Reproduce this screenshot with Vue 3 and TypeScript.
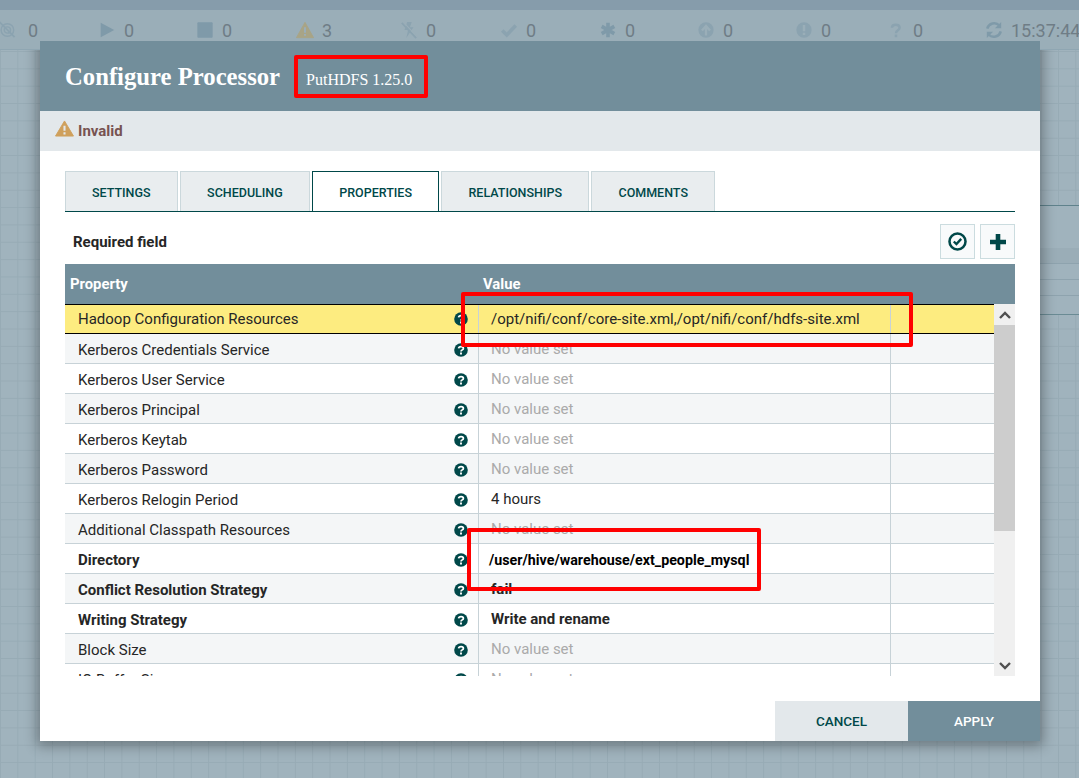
<script setup lang="ts">
interface StatusItem {
  icon: string;
  count: string;
  width: number;
}

interface PropRow {
  name: string;
  value: string;
  required?: boolean;
  unset?: boolean;
}

// counts in the status bar, width = distance to the next item
const statusItems: StatusItem[] = [
  { icon: "disabled", count: "0", width: 96 },
  { icon: "play", count: "0", width: 98 },
  { icon: "stop", count: "0", width: 100 },
  { icon: "warn", count: "3", width: 104 },
  { icon: "bolt", count: "0", width: 100 },
  { icon: "check", count: "0", width: 99 },
  { icon: "star", count: "0", width: 98 },
  { icon: "up", count: "0", width: 98 },
  { icon: "excl", count: "0", width: 92 },
  { icon: "question", count: "0", width: 98 },
  { icon: "refresh", count: "15:37:44", width: 120 },
];

const tabs = ["Settings", "Scheduling", "Properties", "Relationships", "Comments"];
const activeTab = "Properties";

const noValue = "No value set";

const rows: PropRow[] = [
  { name: "Hadoop Configuration Resources", value: "/opt/nifi/conf/core-site.xml,/opt/nifi/conf/hdfs-site.xml" },
  { name: "Kerberos Credentials Service", value: noValue, unset: true },
  { name: "Kerberos User Service", value: noValue, unset: true },
  { name: "Kerberos Principal", value: noValue, unset: true },
  { name: "Kerberos Keytab", value: noValue, unset: true },
  { name: "Kerberos Password", value: noValue, unset: true },
  { name: "Kerberos Relogin Period", value: "4 hours" },
  { name: "Additional Classpath Resources", value: noValue, unset: true },
  { name: "Directory", value: "/user/hive/warehouse/ext_people_mysql", required: true },
  { name: "Conflict Resolution Strategy", value: "fail", required: true },
  { name: "Writing Strategy", value: "Write and rename", required: true },
  { name: "Block Size", value: noValue, unset: true },
  { name: "IO Buffer Size", value: noValue, unset: true },
];
</script>

<template>
  <div class="page">
    <div class="topbar"></div>

    <div class="status">
      <div
        v-for="item in statusItems"
        :key="item.icon"
        class="status-item"
        :style="{ width: item.width + 'px' }"
      >
        <svg class="status-icon" viewBox="0 0 20 20">
          <g v-if="item.icon === 'disabled'" fill="none" stroke="#8ba3b0" stroke-width="1.6">
            <circle cx="6" cy="10" r="7" />
            <circle cx="6" cy="10" r="3.5" />
            <path d="M-3 1 14 18" stroke-width="2" />
          </g>
          <path v-else-if="item.icon === 'play'" d="M3 2 18 10 3 18Z" fill="#7f9aa9" />
          <rect v-else-if="item.icon === 'stop'" x="1.5" y="1.5" width="17" height="17" rx="1" fill="#7f9aa9" />
          <g v-else-if="item.icon === 'warn'">
            <path d="M10 1.5 19.5 18.5H.5Z" fill="#a8a486" stroke="#a8a486" stroke-linejoin="round" />
            <path d="M10 7v6M10 14.5v2" stroke="#9aaeb8" stroke-width="2.2" />
          </g>
          <g v-else-if="item.icon === 'bolt'">
            <path d="M8 1h5l-2 6h4L7 19l2-9H5Z" fill="#8ba3b0" />
            <path d="M2 2 18 19" stroke="#8ba3b0" stroke-width="2" />
            <path d="M3.5 1 19.5 18" stroke="#9aaeb8" stroke-width="1.2" />
          </g>
          <path
            v-else-if="item.icon === 'check'"
            d="M2.5 10.5 7.5 15.5 17.5 5"
            fill="none"
            stroke="#8ba3b0"
            stroke-width="4"
          />
          <path
            v-else-if="item.icon === 'star'"
            d="M10 2v16M3 6l14 8M17 6 3 14"
            fill="none"
            stroke="#7f9aa9"
            stroke-width="4"
          />
          <g v-else-if="item.icon === 'up'">
            <circle cx="10" cy="10" r="8.5" fill="#8ba3b0" />
            <path d="M10 16V6M5.5 10.5 10 5.5l4.5 5" fill="none" stroke="#9aaeb8" stroke-width="2.6" />
          </g>
          <g v-else-if="item.icon === 'excl'">
            <circle cx="10" cy="10" r="8.5" fill="#8ba3b0" />
            <path d="M10 4.5v7M10 13v2.5" stroke="#9aaeb8" stroke-width="2.8" />
          </g>
          <path
            v-else-if="item.icon === 'question'"
            d="M5.5 7.5C5.5 3 14 3 14 7.5 14 10.5 10 10 10 13.5M10 15v3"
            fill="none"
            stroke="#8ba3b0"
            stroke-width="2.8"
          />
          <g v-else fill="none" stroke="#7f9aa9" stroke-width="2.8">
            <path d="M2.5 8.5A8 8 0 0 1 16 5" />
            <path d="M17.5 11.5A8 8 0 0 1 4 15" />
            <path d="M18 1v7h-7Z" fill="#7f9aa9" stroke="none" />
            <path d="M2 19v-7h7Z" fill="#7f9aa9" stroke="none" />
          </g>
        </svg>
        <span class="status-count">{{ item.count }}</span>
      </div>
    </div>

    <div class="canvas">
      <div class="node">
        <div class="node-band"></div>
        <div class="node-line"></div>
        <div class="node-line"></div>
        <div class="node-line"></div>
      </div>
      <div class="modal-shadow"></div>
    </div>

    <div class="modal">
      <header class="modal-header">
        <span class="modal-title">Configure Processor</span>
        <span class="modal-sub">PutHDFS 1.25.0</span>
      </header>

      <div class="banner">
        <svg class="banner-icon" viewBox="0 0 20 18">
          <path d="M10 1 19.5 17H.5Z" fill="#cfa05c" stroke="#cfa05c" stroke-linejoin="round" />
          <path d="M10 6v5.5M10 13v2.4" stroke="#e3e8eb" stroke-width="2.2" />
        </svg>
        <span>Invalid</span>
      </div>

      <div class="modal-body">
        <div class="tabs">
          <div v-for="tab in tabs" :key="tab" class="tab" :class="{ active: tab === activeTab }">
            {{ tab }}
          </div>
        </div>

        <div class="toolbar">
          <span class="required">Required field</span>
          <div class="tool-buttons">
            <button class="tool-btn">
              <svg width="19" height="19" viewBox="0 0 18 18">
                <circle cx="9" cy="9" r="7.6" fill="none" stroke="#004849" stroke-width="2.4" />
                <path d="M5.5 9 8 11.5 12.5 6.5" fill="none" stroke="#004849" stroke-width="2.2" />
              </svg>
            </button>
            <button class="tool-btn">
              <svg width="18" height="18" viewBox="0 0 18 18">
                <path d="M9 1v16M1 9h16" stroke="#004849" stroke-width="4.6" />
              </svg>
            </button>
          </div>
        </div>

        <div class="table-head">
          <span class="head-name">Property</span>
          <span class="head-value">Value</span>
        </div>

        <div class="table">
          <div class="rows">
            <div
              v-for="(row, i) in rows"
              :key="row.name"
              class="row"
              :class="{ selected: i === 0, odd: i % 2 === 1 }"
            >
              <div class="cell-name" :class="{ bold: row.required }">
                <span class="name-text">{{ row.name }}</span>
                <svg class="help" viewBox="0 0 14 14">
                  <circle cx="7" cy="7" r="6.8" fill="#004849" />
                  <path
                    d="M4.6 5.4C4.8 2.9 9.4 2.9 9.4 5.4 9.4 7 7 6.8 7 8.6"
                    fill="none"
                    stroke="#fff"
                    stroke-width="1.7"
                  />
                  <path d="M7 9.6v1.9" stroke="#fff" stroke-width="1.9" />
                </svg>
              </div>
              <div
                class="cell-value"
                :class="{ bold: row.required, unset: row.unset, pasted: row.name === 'Directory' }"
              >
                {{ row.value }}
              </div>
              <div class="cell-end"></div>
            </div>
          </div>
          <div class="scrollbar">
            <div class="scroll-btn">
              <svg width="14" height="10" viewBox="0 0 14 10">
                <path d="M2 8 7 3l5 5" fill="none" stroke="#505050" stroke-width="2.4" />
              </svg>
            </div>
            <div class="scroll-thumb"></div>
            <div class="scroll-track"></div>
            <div class="scroll-btn">
              <svg width="14" height="10" viewBox="0 0 14 10">
                <path d="M2 2 7 7l5-5" fill="none" stroke="#505050" stroke-width="2.4" />
              </svg>
            </div>
          </div>
        </div>
      </div>

      <footer class="modal-footer">
        <div class="btn cancel">Cancel</div>
        <div class="btn apply">Apply</div>
      </footer>
    </div>

    <!-- red annotation boxes drawn on top of the screenshot -->
    <div class="mark mark-title"></div>
    <div class="mark mark-hadoop"></div>
    <div class="mark mark-dir"></div>
  </div>
</template>

<style>
html,
body {
  margin: 0;
  overflow: hidden;
}
</style>

<style scoped>
.page {
  position: relative;
  display: flex;
  flex-direction: column;
  height: 100vh;
  overflow: hidden;
  font-family: Roboto, "Liberation Sans", sans-serif;
  color: #262626;
}

.topbar {
  height: 10px;
  background: #869cab;
}

.status {
  display: flex;
  align-items: flex-start;
  height: 39px;
  background: #9aaeb8;
  border-bottom: 1px solid #8fa6b2;
  white-space: nowrap;
}

.status-item {
  display: flex;
  align-items: center;
  flex: none;
  height: 40px;
}

.status-icon {
  width: 18px;
  height: 18px;
  margin-left: 2px;
  margin-right: 8px;
  overflow: visible;
  flex: none;
}

.status-count {
  font-size: 18px;
  color: #6f7d86;
}

.canvas {
  position: relative;
  flex: 1;
  overflow: hidden;
  background-color: #a0b3bd;
  background-image:
    linear-gradient(to right, #97abb5 1px, transparent 1px),
    linear-gradient(to bottom, #97abb5 1px, transparent 1px);
  background-size: 17.35px 17.35px;
  background-position: 0 1px;
}

/* shape on the flow canvas behind the dialog */
.node {
  position: absolute;
  left: 1000px;
  top: 155px;
  width: 120px;
  height: 108px;
  background: #a0b3bd;
  border-top: 1px solid #5f828c;
  border-bottom: 1px solid #6a8b94;
}

.node-band {
  height: 42px;
  background: #a0b3bd;
  border-bottom: 15px solid #9aadb7;
}

.node-line {
  height: 15px;
  border-top: 1px solid #8ea3ae;
}

.modal-shadow {
  position: absolute;
  left: 40px;
  top: -9px;
  width: 1000px;
  height: 700px;
  box-shadow: 0 2px 12px 3px rgba(0, 0, 0, 0.32);
}

.modal {
  position: absolute;
  left: 40px;
  top: 41px;
  width: 1000px;
  height: 700px;
  display: flex;
  flex-direction: column;
  background: #fff;
}

.modal-header {
  display: flex;
  align-items: center;
  flex: none;
  height: 70px;
  box-sizing: border-box;
  padding: 2px 0 0 25px;
  background: #728e9b;
  color: #fff;
}

.modal-title {
  font-family: "Liberation Serif", serif;
  font-weight: 700;
  font-size: 24.7px;
}

.modal-sub {
  margin-left: 26px;
  margin-top: 5px;
  font-family: "Liberation Serif", serif;
  font-size: 16px;
}

.banner {
  display: flex;
  align-items: center;
  flex: none;
  height: 40px;
  padding-left: 15px;
  background: #e3e8eb;
  color: #775351;
  font-size: 15px;
  font-weight: 700;
}

.banner-icon {
  width: 19px;
  height: 17px;
  margin-right: 4px;
  margin-top: -5px;
}

.modal-body {
  flex: 1;
  display: flex;
  flex-direction: column;
  padding: 20px 25px 0;
  min-height: 0;
}

.tabs {
  display: flex;
  gap: 2.5px;
  height: 41px;
  box-sizing: border-box;
  border-bottom: 1px solid #004849;
}

.tab {
  display: flex;
  align-items: center;
  padding: 1px 26px 0;
  height: 40px;
  box-sizing: border-box;
  background: #e9edef;
  border: 1px solid #cbd8dc;
  border-bottom: none;
  color: #004849;
  font-size: 12.5px;
  font-weight: 500;
  text-transform: uppercase;
}

.tab.active {
  background: #fff;
  border-color: #004849;
}

.toolbar {
  display: flex;
  align-items: center;
  justify-content: space-between;
  flex: none;
  height: 52px;
  padding-left: 8px;
}

.required {
  font-size: 15px;
  font-weight: 700;
  margin-top: 8px;
}

.tool-buttons {
  display: flex;
  gap: 5px;
  margin-top: 7px;
}

.tool-btn {
  display: flex;
  align-items: center;
  justify-content: center;
  width: 35px;
  height: 35px;
  padding: 0;
  background: #f8fafb;
  border: 1px solid #cbdcdf;
}

.table-head {
  display: flex;
  align-items: center;
  flex: none;
  height: 40px;
  background: #728e9b;
  color: #fff;
  font-size: 14.8px;
  font-weight: 700;
}

.head-name {
  width: 413px;
  padding-left: 5px;
  box-sizing: border-box;
}

.head-value {
  padding-left: 5px;
}

.table {
  display: flex;
  flex: none;
  height: 372px;
  overflow: hidden;
}

.rows {
  flex: 1;
  min-width: 0;
}

.row {
  display: grid;
  grid-template-columns: 413px 413px 1fr;
  height: 30px;
  box-sizing: border-box;
  border-bottom: 1px solid #c7d2d7;
  background: #fff;
  font-size: 15px;
  line-height: 29px;
}

.row.odd {
  background: #f4f6f7;
}

.row.selected {
  background: #fdec80;
  border-top: 1px solid #000;
  border-bottom: 1px solid #000;
  line-height: 28px;
}

.cell-name {
  display: flex;
  align-items: center;
  justify-content: space-between;
  padding: 2px 10px 0 13px;
}

.row.selected .cell-name {
  padding-top: 0;
}

.row.selected .cell-value {
  padding-top: 0;
}

.name-text {
  white-space: nowrap;
}

.help {
  width: 14px;
  height: 14px;
  flex: none;
  margin-top: -2px;
}

.row.selected .help {
  margin-top: 0;
}

.cell-value {
  padding: 1px 0 0 12px;
  border-left: 1px solid #c7d2d7;
  border-right: 1px solid #c7d2d7;
  white-space: nowrap;
  overflow: hidden;
}

.bold {
  font-weight: 700;
}

.unset {
  color: #aaaaaa;
}

.pasted {
  padding-top: 2px;
  padding-left: 10px;
  font-size: 14.27px;
  color: #000;
}

.scrollbar {
  display: flex;
  flex-direction: column;
  flex: none;
  width: 21px;
  background: #f0f0f0;
}

.scroll-btn {
  display: flex;
  align-items: center;
  justify-content: center;
  flex: none;
  height: 21px;
}

.scroll-thumb {
  flex: none;
  height: 206px;
  background: #cdcdcd;
}

.scroll-track {
  flex: 1;
}

.modal-footer {
  display: flex;
  justify-content: flex-end;
  flex: none;
  height: 40px;
}

.btn {
  display: flex;
  align-items: center;
  justify-content: center;
  font-size: 13.5px;
  font-weight: 500;
  text-transform: uppercase;
}

.cancel {
  width: 133px;
  background: #e3e8eb;
  color: #004849;
}

.apply {
  width: 132px;
  background: #728e9b;
  color: #fff;
}

.mark {
  position: absolute;
  box-sizing: border-box;
  border: 4px solid #ff0000;
  border-radius: 2px;
}

.mark-title {
  left: 294px;
  top: 55px;
  width: 134px;
  height: 43px;
}

.mark-hadoop {
  left: 461px;
  top: 292px;
  width: 452px;
  height: 55px;
}

.mark-dir {
  left: 467px;
  top: 528px;
  width: 294px;
  height: 63px;
}
</style>
